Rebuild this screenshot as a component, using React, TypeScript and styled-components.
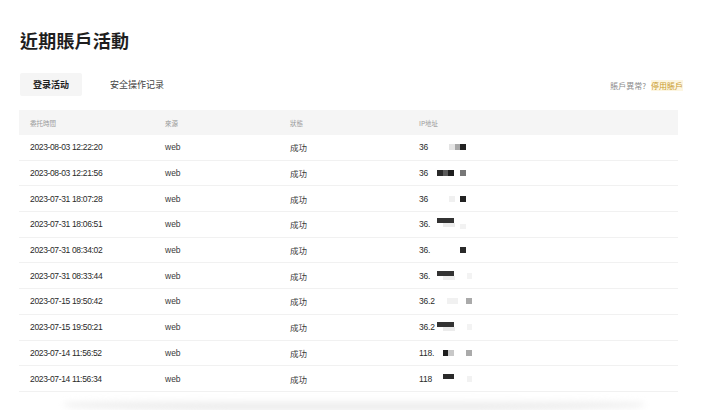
import React from "react";
import styled, { createGlobalStyle } from "styled-components";

const Global = createGlobalStyle`
  html, body { margin: 0; padding: 0; background: #ffffff; }
  body { font-family: "Liberation Sans", "Noto Sans CJK SC", sans-serif; color: #222; overflow: hidden; }
`;

const Page = styled.div`
  width: 714px;
  height: 410px;
  box-sizing: border-box;
  padding: 28px 0 0 19px;
  display: flex;
  flex-direction: column;
`;

const Title = styled.h1`
  margin: 0 0 0 1px;
  font-family: "Noto Sans CJK TC", "Noto Sans CJK SC", sans-serif;
  font-size: 18px;
  line-height: 24px;
  font-weight: 700;
  color: #1e1e1e;
  letter-spacing: 0.2px;
`;

const TabRow = styled.div`
  margin-top: 21px;
  width: 664px;
  height: 23px;
  display: flex;
  align-items: center;
  justify-content: space-between;
`;

const Tabs = styled.div`
  display: flex;
  gap: 15px;
  margin-left: 1px;
`;

const Tab = styled.div<{ $active?: boolean }>`
  height: 23px;
  padding: 0 13px;
  display: flex;
  align-items: center;
  border-radius: 2px;
  font-family: "Noto Sans CJK SC", sans-serif;
  font-size: 9px;
  font-weight: ${(p) => (p.$active ? 600 : 400)};
  color: ${(p) => (p.$active ? "#1e1e1e" : "#444")};
  background: ${(p) => (p.$active ? "#f5f5f5" : "transparent")};
`;

const Abnormal = styled.div`
  font-family: "Noto Sans CJK TC", "Noto Sans CJK SC", sans-serif;
  font-size: 8px;
  color: #8a8a8a;
  display: flex;
  gap: 5px;
  margin-top: 2px;
`;

const Disable = styled.span`
  color: #c99a2e;
  background: #fdf6e1;
`;

const Table = styled.div`
  margin-top: 14px;
  width: 659px;
`;

const Cols = "135px 125px 129px 1fr";

const HeadRow = styled.div`
  display: grid;
  grid-template-columns: ${Cols};
  height: 25px;
  align-items: center;
  background: #f5f5f5;
  padding-left: 11px;
  font-family: "Noto Sans CJK TC", "Noto Sans CJK SC", sans-serif;
  font-size: 6.5px;
  color: #9a9a9a;
`;

const Row = styled.div`
  display: grid;
  grid-template-columns: ${Cols};
  height: 25.7px;
  box-sizing: border-box;
  align-items: center;
  padding-left: 11px;
  border-bottom: 1px solid #f1f1f1;
  font-size: 8.5px;
  color: #2a2a2a;
`;

const DateCell = styled.span`
  letter-spacing: -0.35px;
`;

const Web = styled.span`
  color: #3a3a3a;
`;

const Status = styled.span`
  font-family: "Noto Sans CJK SC", sans-serif;
  font-size: 8.5px;
  color: #3a3a3a;
`;

const IpCell = styled.div`
  position: relative;
  height: 100%;
  display: flex;
  align-items: center;
`;

const IpText = styled.span`
  white-space: nowrap;
  letter-spacing: -0.2px;
`;

const Pixel = styled.span`
  position: absolute;
`;

const Shadow = styled.div`
  margin: 7px 0 0 45px;
  width: 580px;
  height: 22px;
  background: linear-gradient(180deg, rgba(232,232,232,0) 0%, #ececec 60%, #e6e6e6 100%);
  filter: blur(3px);
  border-radius: 40%;
`;

type Px = [number, number, number, number, string];

const rows: { date: string; ip: string; px: Px[] }[] = [
  { date: "2023-08-03 12:22:20", ip: "36", px: [[30, -3, 6, 6, "#e4e4e4"], [36, -3, 5, 6, "#a8a8a8"], [41, -3, 6, 6, "#222"]] },
  { date: "2023-08-03 12:21:56", ip: "36", px: [[18, -3, 6, 6, "#2a2a2a"], [24, -3, 5, 6, "#5a5a5a"], [29, -3, 6, 6, "#1e1e1e"], [41, -3, 6, 6, "#777"]] },
  { date: "2023-07-31 18:07:28", ip: "36", px: [[30, -3, 6, 6, "#f0f0f0"], [41, -3, 6, 6, "#222"]] },
  { date: "2023-07-31 18:06:51", ip: "36.", px: [[18, -6, 17, 5, "#333"], [24, -1, 12, 4, "#ececec"], [41, 0, 6, 5, "#f2f2f2"]] },
  { date: "2023-07-31 08:34:02", ip: "36.", px: [[41, -3, 6, 6, "#2a2a2a"]] },
  { date: "2023-07-31 08:33:44", ip: "36.", px: [[18, -5, 17, 5, "#333"], [24, 0, 12, 4, "#eeeeee"], [48, -3, 5, 6, "#f3f3f3"]] },
  { date: "2023-07-15 19:50:42", ip: "36.2", px: [[28, -3, 11, 6, "#f1f1f1"], [47, -3, 6, 6, "#aaa"]] },
  { date: "2023-07-15 19:50:21", ip: "36.2", px: [[18, -5, 17, 5, "#333"], [24, 0, 12, 4, "#ececec"], [48, -3, 5, 6, "#f3f3f3"]] },
  { date: "2023-07-14 11:56:52", ip: "118.", px: [[24, -3, 5, 6, "#1e1e1e"], [29, -3, 6, 6, "#c8c8c8"], [47, -3, 6, 6, "#aaa"]] },
  { date: "2023-07-14 11:56:34", ip: "118", px: [[24, -5, 11, 5, "#2a2a2a"], [48, -3, 5, 6, "#f2f2f2"]] },
];

export default function App() {
  return (
    <>
      <Global />
      <Page>
        <Title>近期賬戶活動</Title>
        <TabRow>
          <Tabs>
            <Tab $active>登录活动</Tab>
            <Tab>安全操作记录</Tab>
          </Tabs>
          <Abnormal>
            <span>賬戶異常?</span>
            <Disable>停用賬戶</Disable>
          </Abnormal>
        </TabRow>
        <Table>
          <HeadRow>
            <span>委托時間</span>
            <span>來源</span>
            <span>狀態</span>
            <span>IP地址</span>
          </HeadRow>
          {rows.map((r, i) => (
            <Row key={i}>
              <DateCell>{r.date}</DateCell>
              <Web>web</Web>
              <Status>成功</Status>
              <IpCell>
                <IpText>{r.ip}</IpText>
                {r.px.map((p, j) => (
                  <Pixel
                    key={j}
                    style={{ left: p[0], top: `calc(50% + ${p[1]}px)`, width: p[2], height: p[3], background: p[4] }}
                  />
                ))}
              </IpCell>
            </Row>
          ))}
        </Table>
        <Shadow />
      </Page>
    </>
  );
}
